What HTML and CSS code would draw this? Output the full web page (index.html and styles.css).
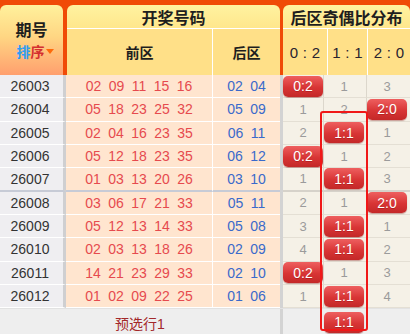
FILE: index.html
```html
<!DOCTYPE html>
<html>
<head>
<meta charset="utf-8">
<link rel="stylesheet" href="styles.css">
</head>
<body>
<div class="board">
  <div class="head">
    <div class="h-period">
      <div class="h-qh">期号</div>
      <div class="h-sort"><span class="s-blue">排</span><span class="s-red">序</span><span class="tri"></span></div>
    </div>
    <div class="h-draw">
      <div class="h-title">开奖号码</div>
      <div class="h-sub">
        <div class="h-front">前区</div>
        <div class="h-back">后区</div>
      </div>
    </div>
    <div class="h-ratio">
      <div class="h-title">后区奇偶比分布</div>
      <div class="h-sub">
        <div class="h-r1">0 : 2</div>
        <div class="h-r2">1 : 1</div>
        <div class="h-r3">2 : 0</div>
      </div>
    </div>
  </div>

  <div class="body">
    <div class="row">
      <div class="c-period">26003</div>
      <div class="c-front"><span>02</span><span>09</span><span>11</span><span>15</span><span>16</span></div>
      <div class="c-back"><span>02</span><span>04</span></div>
      <div class="c-ratio"><div class="cell"><b class="badge">0:2</b></div><div class="cell"><i>1</i></div><div class="cell"><i>3</i></div></div>
    </div>
    <div class="row">
      <div class="c-period">26004</div>
      <div class="c-front"><span>05</span><span>18</span><span>23</span><span>25</span><span>32</span></div>
      <div class="c-back"><span>05</span><span>09</span></div>
      <div class="c-ratio"><div class="cell"><i>1</i></div><div class="cell"><i>2</i></div><div class="cell"><b class="badge">2:0</b></div></div>
    </div>
    <div class="row">
      <div class="c-period">26005</div>
      <div class="c-front"><span>02</span><span>04</span><span>16</span><span>23</span><span>35</span></div>
      <div class="c-back"><span>06</span><span>11</span></div>
      <div class="c-ratio"><div class="cell"><i>2</i></div><div class="cell"><b class="badge">1:1</b></div><div class="cell"><i>1</i></div></div>
    </div>
    <div class="row">
      <div class="c-period">26006</div>
      <div class="c-front"><span>05</span><span>12</span><span>18</span><span>23</span><span>35</span></div>
      <div class="c-back"><span>06</span><span>12</span></div>
      <div class="c-ratio"><div class="cell"><b class="badge">0:2</b></div><div class="cell"><i>1</i></div><div class="cell"><i>2</i></div></div>
    </div>
    <div class="row sep">
      <div class="c-period">26007</div>
      <div class="c-front"><span>01</span><span>03</span><span>13</span><span>20</span><span>26</span></div>
      <div class="c-back"><span>03</span><span>10</span></div>
      <div class="c-ratio"><div class="cell"><i>1</i></div><div class="cell"><b class="badge">1:1</b></div><div class="cell"><i>3</i></div></div>
    </div>
    <div class="row">
      <div class="c-period">26008</div>
      <div class="c-front"><span>03</span><span>06</span><span>17</span><span>21</span><span>33</span></div>
      <div class="c-back"><span>05</span><span>11</span></div>
      <div class="c-ratio"><div class="cell"><i>2</i></div><div class="cell"><i>1</i></div><div class="cell"><b class="badge">2:0</b></div></div>
    </div>
    <div class="row">
      <div class="c-period">26009</div>
      <div class="c-front"><span>05</span><span>12</span><span>13</span><span>14</span><span>33</span></div>
      <div class="c-back"><span>05</span><span>08</span></div>
      <div class="c-ratio"><div class="cell"><i>3</i></div><div class="cell"><b class="badge">1:1</b></div><div class="cell"><i>1</i></div></div>
    </div>
    <div class="row">
      <div class="c-period">26010</div>
      <div class="c-front"><span>02</span><span>03</span><span>13</span><span>18</span><span>26</span></div>
      <div class="c-back"><span>02</span><span>09</span></div>
      <div class="c-ratio"><div class="cell"><i>4</i></div><div class="cell"><b class="badge">1:1</b></div><div class="cell"><i>2</i></div></div>
    </div>
    <div class="row">
      <div class="c-period">26011</div>
      <div class="c-front"><span>14</span><span>21</span><span>23</span><span>29</span><span>33</span></div>
      <div class="c-back"><span>02</span><span>10</span></div>
      <div class="c-ratio"><div class="cell"><b class="badge">0:2</b></div><div class="cell"><i>1</i></div><div class="cell"><i>3</i></div></div>
    </div>
    <div class="row">
      <div class="c-period">26012</div>
      <div class="c-front"><span>01</span><span>02</span><span>09</span><span>22</span><span>25</span></div>
      <div class="c-back"><span>01</span><span>06</span></div>
      <div class="c-ratio"><div class="cell"><i>1</i></div><div class="cell"><b class="badge">1:1</b></div><div class="cell"><i>4</i></div></div>
    </div>
    <div class="row foot">
      <div class="f-left">预选行1</div>
      <div class="c-ratio"><div class="cell"></div><div class="cell"><b class="badge">1:1</b></div><div class="cell"></div></div>
    </div>
  </div>

  <div class="mark"></div>
</div>
</body>
</html>
```
FILE: styles.css
```css
body {
  margin: 0;
  background: #ffffff;
  font-family: "Liberation Sans", "Noto Sans CJK SC", sans-serif;
}

.board {
  position: relative;
  width: 410px;
}

/* ---------- header ---------- */
.head {
  display: flex;
  height: 75px;
  padding-top: 5px;
  box-sizing: border-box;
  background: #f04a06;
}

.h-period {
  width: 63px;
  margin-right: 4px;
  border-radius: 6px 6px 0 0;
  background: linear-gradient(#fff19c, #ffd683 45%, #ff9f6e);
  display: flex;
  flex-direction: column;
  align-items: center;
  justify-content: center;
  font-family: "Noto Sans CJK SC", sans-serif;
  font-weight: bold;
}

.h-qh {
  font-size: 16px;
  line-height: 23px;
  color: #1e1e1e;
  margin-top: -2px;
}

.h-sort {
  font-size: 14px;
  line-height: 20px;
  display: flex;
  align-items: center;
  margin-left: 7px;
}

.s-blue { color: #2e9cf2; }
.s-red { color: #d42f2f; }

.tri {
  width: 0;
  height: 0;
  margin-left: 1px;
  margin-top: 2px;
  border-left: 4px solid transparent;
  border-right: 4px solid transparent;
  border-top: 5px solid #ff6a0a;
}

.h-draw {
  width: 213px;
  display: flex;
  flex-direction: column;
  border-radius: 6px 6px 0 0;
  overflow: hidden;
}

.h-ratio {
  width: 127px;
  margin-left: 3px;
  display: flex;
  flex-direction: column;
  border-radius: 6px 6px 0 0;
  overflow: hidden;
}

.h-title {
  height: 23px;
  border-bottom: 1px solid #ffffff;
  background: linear-gradient(#fff2a0, #ffe78c);
  display: flex;
  align-items: center;
  justify-content: center;
  font-family: "Noto Sans CJK SC", sans-serif;
  font-weight: bold;
  font-size: 16px;
  color: #1e1e1e;
}

.h-sub {
  flex: 1;
  display: flex;
  background: #ffe088;
}

.h-front,
.h-back {
  display: flex;
  align-items: center;
  justify-content: center;
  font-family: "Noto Sans CJK SC", sans-serif;
  font-weight: bold;
  font-size: 14px;
  color: #1e1e1e;
}

.h-front {
  width: 145px;
  border-right: 1px solid #ffffff;
}

.h-back {
  flex: 1;
}

.h-r1,
.h-r2,
.h-r3 {
  display: flex;
  align-items: center;
  justify-content: center;
  font-size: 15px;
  color: #2a2430;
  letter-spacing: 0.3px;
}

.h-r1 { width: 44px; border-right: 1px solid #ffffff; }
.h-r2 { width: 39px; border-right: 1px solid #ffffff; }
.h-r3 { flex: 1; }

/* ---------- body ---------- */
.row {
  display: flex;
  height: 23.33px;
}

.row > div {
  box-sizing: border-box;
  display: flex;
  align-items: center;
}

.c-period {
  width: 66px;
  justify-content: center;
  padding-right: 3px;
  border-right: 3px solid #cfcfd1;
  border-bottom: 1px solid #ffffff;
  background: #efeef1;
  font-size: 14px;
  color: #333333;
}

.c-front,
.c-back {
  justify-content: center;
  gap: 7.4px;
  background: #ffe5cf;
  border-bottom: 1px solid #ffffff;
  font-size: 14px;
}

.c-front {
  width: 147px;
  border-right: 1px solid #ffffff;
  color: #e64a4e;
}

.c-back {
  width: 67px;
  color: #3a6acb;
}

.c-ratio {
  width: 130px;
  border-left: 3px solid #d3d3d3;
  align-items: stretch !important;
}

.cell {
  box-sizing: border-box;
  width: 43px;
  display: flex;
  align-items: center;
  background: #f5f1e7;
  border-bottom: 1px solid #e4dfd4;
}

.cell:first-child {
  width: 41px;
  border-right: 1px solid #dcd7cc;
}

.cell:nth-child(2) {
  border-right: 1px solid #dcd7cc;
}

.cell i {
  width: 40px;
  text-align: center;
  font-style: normal;
  font-size: 13px;
  color: #9b9b9b;
}

.badge {
  width: 40px;
  height: 21px;
  flex: none;
  display: flex;
  align-items: center;
  justify-content: center;
  border-radius: 5px;
  background: linear-gradient(#ee5f5f, #d83535 55%, #c42828);
  box-shadow: 0 1px 1px rgba(120, 0, 0, 0.35);
  color: #ffffff;
  font-weight: normal;
  font-size: 14px;
  text-shadow: 0 1px 0 rgba(120, 0, 0, 0.3);
}

.row.sep .c-period,
.row.sep .c-front,
.row.sep .c-back {
  border-bottom: 2px solid #c7cbd6;
}

.row.sep .cell {
  border-bottom: 2px solid #d6d2ca;
}

.row.foot {
  height: 26px;
  border-top: 1px solid #e2e2e2;
}

.f-left {
  width: 280px;
  justify-content: center;
  background: #eeeeee;
  font-size: 14px;
  color: #a3282a;
  padding-top: 1px;
}

.row.foot .cell {
  background: #eeeeee;
  border: none;
}

/* highlight frame over the 1:1 column */
.mark {
  position: absolute;
  left: 320px;
  top: 111px;
  width: 48px;
  height: 220px;
  box-sizing: border-box;
  border: 2px solid #f01818;
  border-radius: 3px;
  pointer-events: none;
}
```
